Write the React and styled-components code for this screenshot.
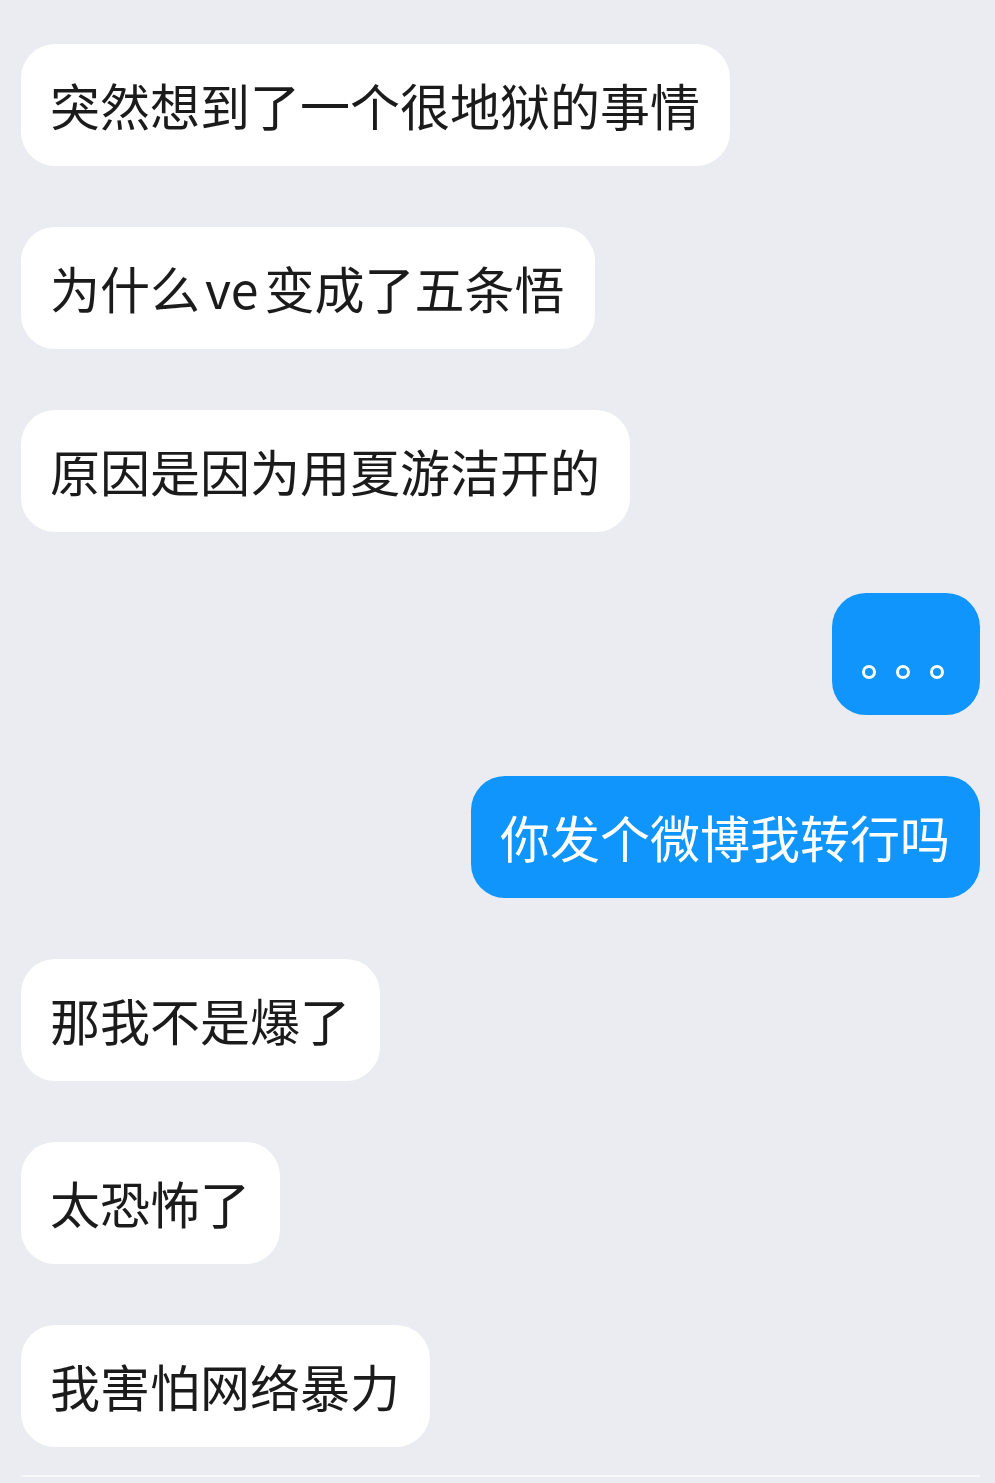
import React from "react";
import styled, { createGlobalStyle } from "styled-components";

const Global = createGlobalStyle`
  html, body {
    margin: 0;
    padding: 0;
    background: #ebecf1;
  }
  body {
    font-family: "Noto Sans CJK SC", "Noto Sans", sans-serif;
  }
`;

const Chat = styled.div`
  display: flex;
  flex-direction: column;
  gap: 61px;
  padding: 44px 15px 0 21px;
  min-height: 1483px;
  box-sizing: border-box;
`;

const Row = styled.div`
  display: flex;
  justify-content: ${(p) => (p.$mine ? "flex-end" : "flex-start")};
`;

const Bubble = styled.div`
  display: flex;
  align-items: center;
  height: 122px;
  box-sizing: border-box;
  padding: 0 30px 3px 29px;
  border-radius: 34px;
  font-size: 50px;
  line-height: 1;
  white-space: nowrap;
  background: ${(p) => (p.$mine ? "#0f95fb" : "#ffffff")};
  color: ${(p) => (p.$mine ? "#ffffff" : "#1b1b1b")};
`;

const Latin = styled.span`
  margin: 0 6px 0 5px;
`;

const DotsBubble = styled(Bubble)`
  width: 148px;
  padding: 36px 0 0 30px;
  gap: 20px;
`;

const Dot = styled.span`
  width: 8px;
  height: 8px;
  border: 3px solid #ffffff;
  border-radius: 50%;
`;

const Footer = styled.div`
  margin-top: -33px;
  height: 2px;
  background: #f6f7f9;
`;

const messages = [
  { text: "突然想到了一个很地狱的事情" },
  { text: ["为什么", "ve", "变成了五条悟"] },
  { text: "原因是因为用夏游洁开的" },
  { dots: true, mine: true },
  { text: "你发个微博我转行吗", mine: true },
  { text: "那我不是爆了" },
  { text: "太恐怖了" },
  { text: "我害怕网络暴力" },
];

function renderText(t) {
  if (Array.isArray(t)) {
    return (
      <>
        {t[0]}
        <Latin>{t[1]}</Latin>
        {t[2]}
      </>
    );
  }
  return t;
}

export default function App() {
  return (
    <>
      <Global />
      <Chat>
        {messages.map((m, i) => (
          <Row key={i} $mine={m.mine}>
            {m.dots ? (
              <DotsBubble $mine aria-label="。。。">
                <Dot />
                <Dot />
                <Dot />
              </DotsBubble>
            ) : (
              <Bubble $mine={m.mine}>{renderText(m.text)}</Bubble>
            )}
          </Row>
        ))}
        <Footer />
      </Chat>
    </>
  );
}
